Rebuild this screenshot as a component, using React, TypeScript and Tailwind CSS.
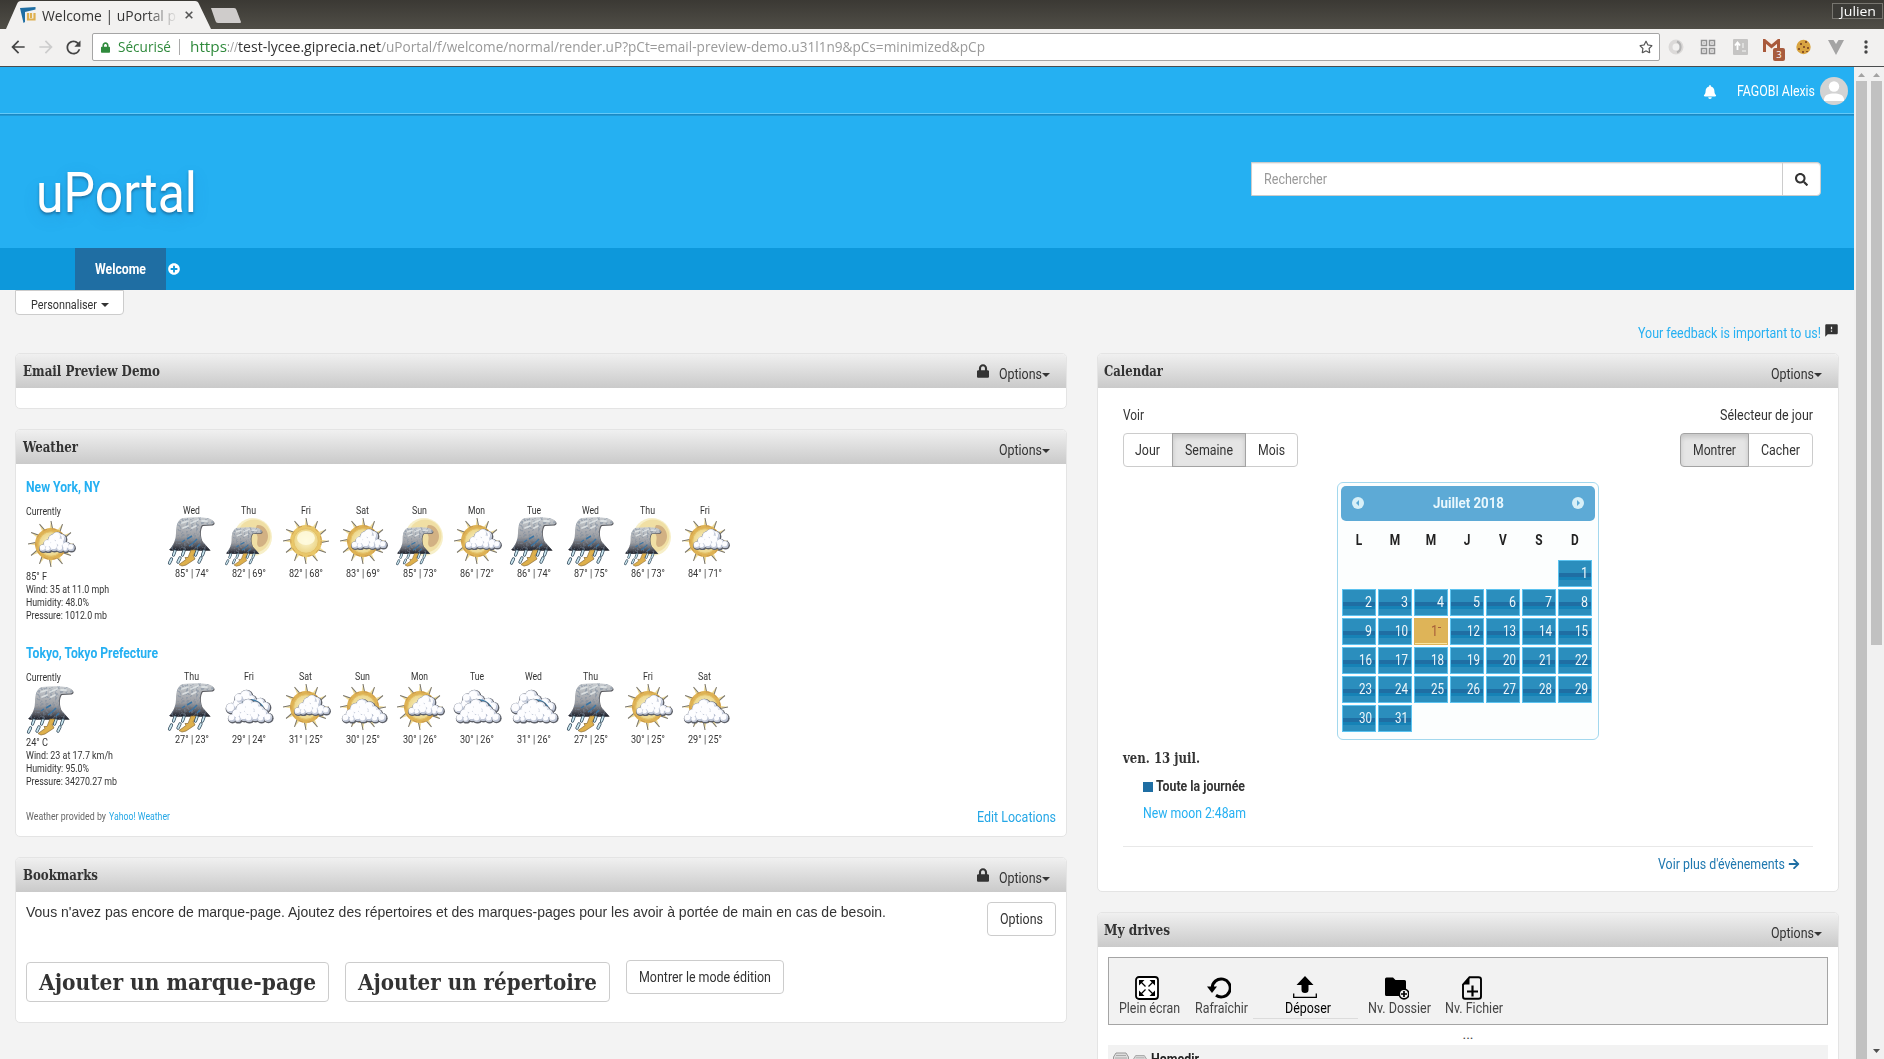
import { ReactNode, useLayoutEffect, useRef } from "react";
import {
  FaArrowRight,
  FaBell,
  FaLock,
  FaSearch,
  FaPlusCircle,
  FaRegStar,
} from "react-icons/fa";
import { MdArrowBack, MdArrowForward, MdRefresh, MdFeedback } from "react-icons/md";

/* Single-line text condensed horizontally to a given width. */
function T({ w, children, className = "" }: { w: number; children: ReactNode; className?: string }) {
  const ref = useRef<HTMLSpanElement>(null);
  useLayoutEffect(() => {
    const el = ref.current;
    if (!el) return;
    el.style.transform = "none";
    const natural = el.getBoundingClientRect().width;
    el.style.transform = `scaleX(${w / natural})`;
  }, [w, children]);
  return (
    <span className={"inline-block shrink-0 align-top whitespace-nowrap " + className} style={{ width: w }}>
      <span ref={ref} className="inline-block origin-left whitespace-pre">
        {children}
      </span>
    </span>
  );
}

const SLAB = "font-['DejaVu_Serif_Condensed','DejaVu_Serif',serif] font-bold";

/* ---------- weather drawings ---------- */

function SunBody({ bright = false }: { bright?: boolean }) {
  return (
    <g>
      {Array.from({ length: 12 }, (_, i) => (
        <g key={i} transform={`rotate(${i * 30} 24 24)`}>
          <path d="M22.4 10 L24 1 L25.8 10Z" fill="#efdc9a" />
          <path d="M24 1 L25.8 10" stroke="#77736a" strokeWidth="1" />
        </g>
      ))}
      <circle cx="24" cy="24" r="16" fill={bright ? "#e9c769" : "#deb254"} />
      <circle cx="24" cy="24" r="15.2" stroke="#c08b45" strokeWidth="1" strokeDasharray="4 5" opacity=".7" />
      <circle cx="24" cy="24" r="12.3" fill="url(#sunCore)" stroke="#e4c067" strokeWidth="1" />
      {bright && <ellipse cx="24" cy="21" rx="9" ry="7" fill="#fffbe0" opacity=".85" />}
    </g>
  );
}

type Puff = [number, number, number];

/* A cumulus built from overlapping puffs, dark along its lower right rim. */
function Cloud({ puffs }: { puffs: Puff[] }) {
  return (
    <g>
      {puffs.map(([x, y, r], i) => (
        <circle key={i} cx={x + 0.5} cy={y + 0.7} r={r + 0.9} fill="#5d6069" />
      ))}
      {puffs.map(([x, y, r], i) => (
        <circle key={i} cx={x} cy={y} r={r} fill="#e3e7f1" />
      ))}
      {puffs.map(([x, y, r], i) => (
        <g key={i}>
          <circle cx={x + r * 0.2} cy={y + r * 0.25} r={r * 0.75} fill="#b4bccf" opacity=".75" />
          <circle cx={x - r * 0.12} cy={y - r * 0.12} r={r * 0.72} fill="#fdfdff" />
        </g>
      ))}
    </g>
  );
}

const SMALL_CLOUD: Puff[] = [
  [34, 19, 5],
  [27, 20, 6],
  [30, 17, 5],
  [21, 24, 4.5],
  [33, 23, 5.5],
  [16, 28, 3.5],
  [27, 26, 5],
  [39, 26, 4],
  [44, 27.5, 3.5],
  [21, 28.5, 3],
  [33, 28, 3.5],
  [38.5, 29, 2.5],
];

const BACK_CLOUD: Puff[] = [
  [6, 25, 5],
  [13, 21, 5],
  [21, 13, 6],
  [14, 15, 4.5],
  [26, 17, 5],
  [35, 20, 5],
  [40, 24, 5],
];

const BIG_CLOUD: Puff[] = [
  [23, 22, 6],
  [30, 24, 5.5],
  [17, 26, 6],
  [25, 28, 6.5],
  [34, 28, 5.5],
  [12, 31, 5],
  [38, 31, 5],
  [19, 33, 5],
  [30, 33, 5],
  [7, 35, 3.8],
  [43, 34.5, 4.2],
  [13, 36, 3],
  [24, 35, 4],
  [36, 35.5, 3.5],
];

const STORM_PATH =
  "M0 33C4 29 7 23 7 16C7 8 9 2 14 1C22 0 32 0 38 1C44 2 47 6 43 7.500L33 8C30 12 31 20 33 24L41 33Z";

function StormCloud() {
  return (
    <g>
      <path d={STORM_PATH} fill="#5a5b60" transform="translate(.8 .9)" />
      <path d={STORM_PATH} fill="url(#stormFill)" />
      <path d={STORM_PATH} fill="#000" filter="url(#grain)" opacity=".5" />
      <path d="M13 6l6-2M22 6l7-3M33 4l5 0M14 11l5-2M23 11l4-2" stroke="#e4e8ea" strokeWidth="1.800" strokeLinecap="round" opacity=".8" />
      <path d="M18 22l5-3M24 26l4-4M13 25l3-2M20 29l4-3M28 30l3-3" stroke="#3a74a3" strokeWidth="1.500" />
      <path d="M22 33h6l-2 5h-2l2 4l-9 6l-4 1l-3-1.500l7-5l-1-2h3z" fill="#deb04c" stroke="#8a6a34" strokeWidth=".7" />
      <path d="M6 34l-1.500 4M15 34l-1.500 4M2.500 42l-2 4M11 41l-2 4M28 34l-1.500 4M35 34l-1.500 4M32 41l-2 4" stroke="#30485a" strokeWidth="3.200" strokeLinecap="round" />
      <path d="M6 34l-1.500 4M15 34l-1.500 4M2.500 42l-2 4M11 41l-2 4M28 34l-1.500 4M35 34l-1.500 4M32 41l-2 4" stroke="#cbe6ef" strokeWidth="1.700" strokeLinecap="round" />
    </g>
  );
}

type Kind = "storm" | "moonstorm" | "sun" | "partly" | "mostly" | "cloudy";

function WeatherIcon({ kind }: { kind: Kind }) {
  return (
    <svg width="48" height="50" viewBox="0 0 48 50" className="block overflow-visible" fill="none">
      {kind === "sun" && <SunBody bright />}
      {kind === "partly" && (
        <>
          <SunBody />
          <Cloud puffs={SMALL_CLOUD} />
        </>
      )}
      {kind === "mostly" && (
        <>
          <SunBody />
          <Cloud puffs={BIG_CLOUD} />
        </>
      )}
      {kind === "cloudy" && (
        <>
          <Cloud puffs={BACK_CLOUD} />
          <path d="M12 27c4-6 8-10 13-10c6 0 10 3 13 7" stroke="#3a7cab" strokeWidth="1.800" />
          <Cloud puffs={BIG_CLOUD} />
        </>
      )}
      {kind === "storm" && (
        <g transform="translate(1 0)">
          <StormCloud />
        </g>
      )}
      {kind === "moonstorm" && (
        <>
          <circle cx="28" cy="20" r="19" fill="#f7efc8" />
          <circle cx="29" cy="19" r="16.500" fill="#f0dfa4" />
          <path d="M32 8c6-1 11 5 11 11c0 6-4 11-9 11c-4-3 0-8-2-12c-2-3-2-7 0-10z" fill="#d2b183" />
          <g transform="translate(1 10) scale(.8)">
            <StormCloud />
          </g>
        </>
      )}
    </svg>
  );
}

function Defs() {
  return (
    <svg width="0" height="0" className="absolute">
      <defs>
        <radialGradient id="sunCore">
          <stop offset="0" stopColor="#fcf7d4" />
          <stop offset="1" stopColor="#ecd587" />
        </radialGradient>
        <linearGradient id="stormFill" x1="0" y1="0" x2="0" y2="1">
          <stop offset="0" stopColor="#c9cdd1" />
          <stop offset=".6" stopColor="#9b9da2" />
          <stop offset=".85" stopColor="#55575f" />
          <stop offset="1" stopColor="#1f222c" />
        </linearGradient>
        <filter id="grain" x="0" y="0" width="100%" height="100%">
          <feTurbulence type="fractalNoise" baseFrequency=".4" numOctaves="2" seed="4" />
          <feColorMatrix type="matrix" values="0 0 0 0 .2 0 0 0 0 .26 0 0 0 0 .34 0 0 0 7 -3.500" />
          <feComposite in2="SourceGraphic" operator="in" />
        </filter>
      </defs>
    </svg>
  );
}

/* ---------- browser frame ---------- */

function BrowserBar() {
  return (
    <div className="shrink-0">
      <div className="flex h-[29px] items-start bg-linear-to-b from-[#3b3934] to-[#504e47]">
        <div className="relative ml-[6px] h-[29px] w-[205px]">
          <svg className="absolute inset-0" width="205" height="29">
            <path d="M0 29L11 4Q12 1 15 1H189Q192 1 193 4L205 29Z" fill="#f2f1f0" />
          </svg>
          <div className="relative flex h-[29px] items-center pl-[14px]">
            <svg width="16" height="17" viewBox="0 0 16 17" className="mt-px mr-[6px]">
              <path d="M0 1L15.500 0V2.500L5 5L5 15L3.500 16Z" fill="#1f6ea3" />
              <path d="M8 6v6.500h6.500V6M11 6v5" stroke="#deb050" strokeWidth="2.200" fill="none" />
            </svg>
            <div className="relative h-[24px] w-[136px] font-['Open_Sans'] text-[15px] leading-[24px] text-[#333]">
              <T w={134}>Welcome | uPortal p</T>
              <div className="absolute top-0 right-0 h-full w-8 bg-linear-to-r from-transparent to-[#f2f1f0]" />
            </div>
            <svg width="8" height="8" viewBox="0 0 8 8" className="ml-[7px] mt-px">
              <path d="M.7 .7L7.300 7.300M7.300 .7L.7 7.300" stroke="#555" strokeWidth="1.600" />
            </svg>
          </div>
        </div>
        <svg width="32" height="16" viewBox="0 0 32 16" className="mt-[8px] -ml-px">
          <path d="M1 0H24Q26 0 26.500 2L31 14Q31 15 30 15H8Q6 15 5.500 13Z" fill="#cfcccb" />
        </svg>
        <div className="mt-[3px] mr-px ml-auto flex h-[16px] w-[51px] items-center justify-center border border-[#77756f] bg-[#3c3b37] font-['Open_Sans'] text-[13px] leading-none text-white">
          <T w={36}>Julien</T>
        </div>
      </div>
      <div className="flex h-[38px] items-center border-b border-[#4a4c4e] bg-[#f2f1f0] pb-px">
        <div className="flex w-[92px] items-center pl-[8px] text-[20px] text-[#444]">
          <MdArrowBack />
          <MdArrowForward className="ml-[8px] text-[#ccc]" />
          <MdRefresh className="ml-[7px] text-[21px]" />
        </div>
        <div className="flex h-[28px] w-[1568px] items-center rounded-[2px] border border-[#a5a5a5] bg-white font-['Open_Sans'] text-[14px] leading-[26px] text-[#9a9a9a]">
          <FaLock className="mr-[8px] ml-[8px] h-[11px] w-[9px] text-[#2f8a3c]" />
          <T w={53} className="text-[#2f8a3c]">Sécurisé</T>
          <span className="mx-[8px] h-[16px] w-px bg-[#aaa]" />
          <T w={37} className="ml-[2px] text-[#2f8a3c]">https</T>
          <T w={11}>://</T>
          <T w={143} className="text-[#333]">test-lycee.giprecia.net</T>
          <T w={604}>/uPortal/f/welcome/normal/render.uP?pCt=email-preview-demo.u31l1n9&pCs=minimized&pCp</T>
          <FaRegStar className="mr-[6px] ml-auto text-[14px] text-[#555]" />
        </div>
        <div className="flex flex-1 items-center pl-[8px]">
          <svg width="16" height="16" viewBox="0 0 16 16" fill="none">
            <circle cx="8" cy="8" r="5.500" stroke="#dbd9d8" strokeWidth="4" />
            <path d="M9 2.500A6 6 0 0 1 9 13.500" stroke="#b3b3b3" strokeWidth="2" />
          </svg>
          <svg width="16" height="16" viewBox="0 0 16 16" fill="none" className="ml-[16px]" stroke="#909090" strokeWidth="1.500">
            <path d="M1.500 1.500h5v5h-5zM9.500 1.500h5v5h-5zM1.500 9.500h5v5h-5zM9.500 9.500h5v5h-5z" />
            <path d="M3.500 4h1M11.500 4h1M3.500 12h1M11.500 12h1" />
          </svg>
          <svg width="15" height="16" viewBox="0 0 15 16" className="ml-[17px]">
            <rect width="15" height="16" rx="1" fill="#c5c4c3" />
            <path d="M4.500 11V5M2 6.500L4.500 3.500L7 6.500" stroke="#fff" strokeWidth="1.800" fill="none" />
            <path d="M10 4v5M9 12h4" stroke="#e6e6e6" strokeWidth="1.500" />
          </svg>
          <svg width="23" height="23" viewBox="0 0 23 23" className="mt-[7px] ml-[15px]">
            <path d="M0 0H17V13H0Z" fill="#f6eee9" />
            <path d="M1.500 13V1.500L8.500 7.500L15.500 1.500V13" stroke="#a9593b" strokeWidth="3" fill="none" />
            <rect x="10" y="9" width="12" height="13" rx="2" fill="#a85c3e" />
            <text x="16" y="19" textAnchor="middle" fontFamily="Open Sans" fontSize="9.500" fill="#fff">3</text>
          </svg>
          <svg width="15" height="16" viewBox="0 0 15 16" className="ml-[10px]">
            <circle cx="7.500" cy="8" r="7.200" fill="#d9a441" />
            <path d="M4 4h2v2H4zM9 2h2v2H9zM2 9h2v2H2zM7 7h2v2H7zM11 8h2v2h-2zM6 12h2v2H6zM10 12h2v1h-2z" fill="#8b5426" />
          </svg>
          <svg width="16" height="15" viewBox="0 0 16 15" className="ml-[17px]">
            <path d="M0 0H5.500L8 4L10.500 0H16L8 15Z" fill="#a4a4a4" />
          </svg>
          <svg width="4" height="14" viewBox="0 0 4 14" className="ml-[20px]" fill="#444">
            <circle cx="2" cy="2" r="1.700" />
            <circle cx="2" cy="7" r="1.700" />
            <circle cx="2" cy="12" r="1.700" />
          </svg>
        </div>
      </div>
    </div>
  );
}

function Scrollbars() {
  return (
    <div className="flex w-[30px] shrink-0 bg-[#f1f1f1] pl-[2px]">
      <div className="flex w-[11px] flex-col">
        <svg width="11" height="14" className="shrink-0">
          <path d="M2 10L5.500 6L9 10Z" fill="#a3a3a3" />
        </svg>
        <div className="flex-1 bg-[#c1c1c1]" />
      </div>
      <div className="ml-[4px] flex w-[11px] flex-col justify-between">
        <div>
          <svg width="11" height="14" className="block">
            <path d="M2 10L5.500 6L9 10Z" fill="#a3a3a3" />
          </svg>
          <div className="h-[564px] bg-[#c1c1c1]" />
        </div>
        <svg width="11" height="14">
          <path d="M2 4L5.500 8L9 4Z" fill="#505050" />
        </svg>
      </div>
    </div>
  );
}

/* ---------- portal ---------- */

function Header() {
  return (
    <header>
      <div className="flex h-[46px] items-start justify-end bg-[#25b0f2] pt-[10px] pr-[6px] text-white">
        <FaBell className="mt-[8px] mr-[20px] h-[14px] w-[14px]" />
        <T w={78} className="text-[14px] leading-[29px]">FAGOBI Alexis</T>
        <svg width="28" height="28" viewBox="0 0 28 28" className="ml-[5px]">
          <circle cx="14" cy="14" r="14" fill="#d3d3d3" />
          <circle cx="14" cy="9.500" r="5.200" fill="#fff" />
          <path d="M4 22.500C4 18 9 16.500 14 16.500S24 18 24 22.500V24H4Z" fill="#fff" />
        </svg>
      </div>
      <div className="h-[135px] border-t border-[#63c9f8] bg-[#25b0f2]">
        <div className="h-[2px] bg-linear-to-b from-[#1a83bd] to-[#229fdc]" />
        <div className="flex items-start justify-between pr-[33px] pl-[36px]">
          <h1 className="mt-[44px] text-[56px] leading-[66px] text-white [text-shadow:0_2px_3px_rgba(20,70,110,.55),0_5px_18px_rgba(20,90,140,.15)]">
            <T w={161}>uPortal</T>
          </h1>
          <div className="mt-[46px] flex h-[34px] w-[570px] overflow-hidden rounded-r border border-[#ccc] bg-white shadow-[inset_0_1px_1px_rgba(0,0,0,.08)]">
            <div className="flex-1 pl-[12px] text-[14px] leading-[32px] text-[#999]">
              <T w={63}>Rechercher</T>
            </div>
            <div className="flex w-[38px] items-center justify-center border-l border-[#ccc]">
              <FaSearch className="text-[13px] text-[#333]" />
            </div>
          </div>
        </div>
      </div>
      <nav className="flex h-[42px] items-center bg-[#0d98db] pl-[75px] text-white">
        <div className="flex h-full w-[91px] items-center justify-center bg-[#1f6ea3] text-[14px] font-bold">
          <T w={51}>Welcome</T>
        </div>
        <FaPlusCircle className="ml-[2px] text-[12px]" />
      </nav>
    </header>
  );
}

function Caret({ className = "" }: { className?: string }) {
  return (
    <svg width="8" height="4" viewBox="0 0 8 4" className={"shrink-0 " + className}>
      <path d="M0 0H8L4 4Z" fill="#333" />
    </svg>
  );
}

function Portlet({
  title,
  tw,
  lock = false,
  className = "",
  headPad = "pl-[7px]",
  children,
}: {
  title: string;
  tw: number;
  lock?: boolean;
  className?: string;
  headPad?: string;
  children?: ReactNode;
}) {
  return (
    <section className={"flex shrink-0 flex-col overflow-hidden rounded-[5px] border border-[#e4e4e4] bg-white " + className}>
      <div className={"flex h-[34px] shrink-0 items-center bg-linear-to-b from-[#f0f0f0] to-[#cacaca] pr-[16px] text-[#333] " + headPad}>
        <h2 className={"text-[14px] leading-[34px] " + SLAB}>
          <T w={tw}>{title}</T>
        </h2>
        <div className="ml-auto flex items-center">
          {lock && <FaLock className="mr-[10px] h-[14px] w-[12px]" />}
          <T w={43} className="mt-[6px] text-[14px] leading-[20px]">Options</T>
          <Caret className="mt-[7px]" />
        </div>
      </div>
      {children}
    </section>
  );
}

type Day = [string, Kind, string];

const NEW_YORK: Day[] = [
  ["Wed", "storm", "85° | 74°"],
  ["Thu", "moonstorm", "82° | 69°"],
  ["Fri", "sun", "82° | 68°"],
  ["Sat", "partly", "83° | 69°"],
  ["Sun", "moonstorm", "85° | 73°"],
  ["Mon", "partly", "86° | 72°"],
  ["Tue", "storm", "86° | 74°"],
  ["Wed", "storm", "87° | 75°"],
  ["Thu", "moonstorm", "86° | 73°"],
  ["Fri", "partly", "84° | 71°"],
];

const TOKYO: Day[] = [
  ["Thu", "storm", "27° | 23°"],
  ["Fri", "cloudy", "29° | 24°"],
  ["Sat", "partly", "31° | 25°"],
  ["Sun", "mostly", "30° | 25°"],
  ["Mon", "partly", "30° | 26°"],
  ["Tue", "cloudy", "30° | 26°"],
  ["Wed", "cloudy", "31° | 26°"],
  ["Thu", "storm", "27° | 25°"],
  ["Fri", "partly", "30° | 25°"],
  ["Sat", "mostly", "29° | 25°"],
];

const DAY_WIDTH: Record<string, number> = { Wed: 17, Thu: 15, Fri: 10, Sat: 13, Sun: 15, Mon: 17, Tue: 14 };

function City({ name, nw, now, facts, days }: { name: string; nw: number; now: Kind; facts: [string, number][]; days: Day[] }) {
  return (
    <div className="h-[166px] text-[11px] leading-[13px] text-[#333]">
      <h3 className="h-[26px] text-[14.500px] leading-[20px] font-bold text-[#25b0f2]">
        <T w={nw}>{name}</T>
      </h3>
      <div className="flex">
        <div className="w-[137px] pt-[1px]">
          <div className="h-[13px]"><T w={35}>Currently</T></div>
          <div className="ml-[1px] h-[52px] pt-[2px]">
            <WeatherIcon kind={now} />
          </div>
          {facts.map(([text, w]) => (
            <div key={text} className="h-[13px]">
              <T w={w}>{text}</T>
            </div>
          ))}
        </div>
        {days.map(([day, kind, temps], i) => (
          <div key={i} className="flex w-[57px] flex-col items-center">
            <T w={DAY_WIDTH[day]}>{day}</T>
            <div className="h-[50px]">
              <WeatherIcon kind={kind} />
            </div>
            <T w={34}>{temps}</T>
          </div>
        ))}
      </div>
    </div>
  );
}

function Weather() {
  return (
    <Portlet title="Weather" tw={55} className="mt-[20px] h-[408px]">
      <div className="flex flex-1 flex-col pt-[14px] pr-[10px] pl-[10px]">
        <City
          name="New York, NY"
          nw={74}
          now="partly"
          facts={[["85° F", 21], ["Wind: 35 at 11.0 mph", 83], ["Humidity: 48.0%", 63], ["Pressure: 1012.0 mb", 81]]}
          days={NEW_YORK}
        />
        <City
          name="Tokyo, Tokyo Prefecture"
          nw={132}
          now="storm"
          facts={[["24° C", 22], ["Wind: 23 at 17.7 km/h", 87], ["Humidity: 95.0%", 63], ["Pressure: 34270.27 mb", 91]]}
          days={TOKYO}
        />
        <div className="-mt-[1px] flex items-center text-[10.500px] leading-[16px] text-[#666]">
          <T w={80}>Weather provided by</T>
          <T w={61} className="ml-[3px] text-[#25a7e6]">Yahoo! Weather</T>
          <T w={79} className="ml-auto text-[14px] leading-[16px] text-[#25a7e6]">Edit Locations</T>
        </div>
      </div>
    </Portlet>
  );
}

function Button({ children, className = "" }: { children: ReactNode; className?: string }) {
  return (
    <div className={"flex shrink-0 items-center justify-center rounded border border-[#ccc] bg-white text-[14px] leading-[20px] text-[#333] " + className}>
      {children}
    </div>
  );
}

function Bookmarks() {
  return (
    <Portlet title="Bookmarks" tw={75} lock className="mt-[20px] h-[166px]">
      <div className="flex flex-col px-[10px] pt-[9px]">
        <div className="flex h-[61px] items-start justify-between">
          <p className="font-['Liberation_Sans'] text-[15px] leading-[22px] text-[#333]">
            <T w={860}>
              Vous n'avez pas encore de marque-page. Ajoutez des répertoires et des marques-pages pour les avoir à portée de main en cas de besoin.
            </T>
          </p>
          <Button className="mt-[1px] h-[34px] w-[69px]">
            <T w={43}>Options</T>
          </Button>
        </div>
        <div className="flex items-start">
          <Button className={"h-[40px] w-[303px] " + SLAB}>
            <T w={277} className="text-[22px] leading-[38px]">Ajouter un marque-page</T>
          </Button>
          <Button className={"ml-[16px] h-[40px] w-[265px] " + SLAB}>
            <T w={239} className="text-[22px] leading-[38px]">Ajouter un répertoire</T>
          </Button>
          <Button className="-mt-[2px] ml-[16px] h-[34px] w-[158px]">
            <T w={132}>Montrer le mode édition</T>
          </Button>
        </div>
      </div>
    </Portlet>
  );
}

function Segmented({ items }: { items: { label: string; tw: number; on?: boolean; cls: string }[] }) {
  return (
    <div className="flex text-[14px] leading-[20px]">
      {items.map((it) => (
        <div
          key={it.label}
          className={
            "flex h-[34px] items-center justify-center border " +
            it.cls +
            (it.on ? " z-10 border-[#a3a3a3] bg-[#e5e5e5] shadow-[inset_0_3px_5px_rgba(0,0,0,.14)]" : " border-[#ccc]")
          }
        >
          <T w={it.tw}>{it.label}</T>
        </div>
      ))}
    </div>
  );
}

const WEEKDAYS = ["L", "M", "M", "J", "V", "S", "D"];

function MonthArrow({ flip = false }: { flip?: boolean }) {
  return (
    <svg width="12" height="12" viewBox="0 0 12 12" className={flip ? "rotate-180" : ""}>
      <circle cx="6" cy="6" r="6" fill="#d8f0f8" />
      <path d="M7 3V9L4 6Z" fill="#5daad6" />
    </svg>
  );
}

function DatePicker() {
  return (
    <div className="mt-[15px] ml-[214px] h-[258px] w-[262px] rounded-[6px] border border-[#a3d8ee] bg-[#fcfefe] p-[3px]">
      <div className="flex h-[35px] items-center justify-between rounded-[5px] bg-[#5daad6] px-[11px] pb-[2px] text-[15px] font-bold text-[#eaf8fd]">
        <MonthArrow />
        <T w={71}>Juillet 2018</T>
        <MonthArrow flip />
      </div>
      <div className="mt-[9px] grid grid-cols-[repeat(7,36px)] text-center text-[14px] leading-[20px] font-bold text-[#222]">
        {WEEKDAYS.map((d, i) => (
          <span key={i} className="scale-x-85">{d}</span>
        ))}
      </div>
      <div className="mt-[10px] grid grid-cols-[repeat(7,34px)] gap-[2px] pl-px text-[14px] leading-[25px] text-[#eef7fb]">
        {Array.from({ length: 31 }, (_, i) => i + 1).map((n) =>
          n === 11 ? (
            <div key={n} className="flex h-[27px] justify-end border border-[#deb458] bg-[#deb458] pr-[6px] text-[#a65f3a] shadow-[inset_0_-1px_0_#fae5a0]">
              <T w={7}>1</T>
              <span className="mt-[8px] h-px w-[3px] bg-[#a65f3a]" />
            </div>
          ) : (
            <div
              key={n}
              className={
                "h-[27px] border border-[#5cc3f0] bg-[linear-gradient(#2b8ebd_0_12px,#1f6ea3_12px_16px,#1682b6_16px_19px,#2b8ebd_19px)] pr-[3px] text-right " +
                (n === 1 ? "col-start-7" : "")
              }
            >
              <T w={n < 10 ? 7 : 13}>{n}</T>
            </div>
          ),
        )}
      </div>
    </div>
  );
}

function Calendar() {
  return (
    <Portlet title="Calendar" tw={59} headPad="pl-[6px]" className="h-[539px]">
      <div className="flex flex-col px-[25px] pt-[17px] text-[14px] leading-[20px] text-[#333]">
        <div className="flex justify-between">
          <T w={21}>Voir</T>
          <T w={93}>Sélecteur de jour</T>
        </div>
        <div className="mt-[8px] flex justify-between">
          <Segmented
            items={[
              { label: "Jour", tw: 25, cls: "w-[50px] rounded-l pr-px" },
              { label: "Semaine", tw: 48, on: true, cls: "-ml-px w-[74px]" },
              { label: "Mois", tw: 27, cls: "-ml-px w-[53px] rounded-r" },
            ]}
          />
          <Segmented
            items={[
              { label: "Montrer", tw: 43, on: true, cls: "w-[69px] rounded-l" },
              { label: "Cacher", tw: 39, cls: "-ml-px w-[65px] rounded-r" },
            ]}
          />
        </div>
        <DatePicker />
        <h3 className={"mt-[8px] text-[14px] leading-[20px] " + SLAB}>
          <T w={77}>ven. 13 juil.</T>
        </h3>
        <div className="mt-[8px] flex items-center pl-[20px] font-bold">
          <span className="mt-[2px] mr-[3px] size-[10px] bg-[#1f6ea3]" />
          <T w={89}>Toute la journée</T>
        </div>
        <div className="mt-[7px] pl-[20px] text-[#25b0f2]">
          <T w={103}>New moon 2:48am</T>
        </div>
        <div className="mt-[23px] flex items-center justify-end border-t border-[#e8e8e8] pt-[7px] pr-[13px] text-[#1f78b0]">
          <T w={127}>Voir plus d'évènements</T>
          <FaArrowRight className="ml-[3px] text-[12px] text-[#1f6ea3]" />
        </div>
      </div>
    </Portlet>
  );
}

const DRIVE_ICONS = {
  full: (
    <>
      <rect x="1" y="1" width="22" height="22" rx="3" fill="#fff" stroke="#000" strokeWidth="1.800" />
      <path d="M4 4h5.500L4 9.500zM20 4h-5.500l5.500 5.500zM4 20h5.500l-5.500-5.500zM20 20h-5.500l5.500-5.500z" fill="#000" />
      <path d="M6 6l4.500 4.500M18 6l-4.500 4.500M6 18l4.500-4.500M18 18l-4.500-4.500" stroke="#000" strokeWidth="1.300" />
    </>
  ),
  refresh: (
    <>
      <path d="M5.200 12A9 9 0 1 1 9 19.300" fill="none" stroke="#000" strokeWidth="3" />
      <path d="M0 10.500H10L5 17Z" fill="#000" />
    </>
  ),
  upload: (
    <>
      <path d="M12 0L20.500 9H15.500V14Q15.500 17 12 17T8.500 14V9H3.500Z" fill="#000" />
      <path d="M.7 17.500V21.300H23.300V17.500" fill="none" stroke="#000" strokeWidth="1.300" />
    </>
  ),
  folder: (
    <>
      <path d="M0 3Q0 1.500 1.500 1.500H8L10.500 4H19.500Q21 4 21 5.500V14L14 20H1.500Q0 20 0 18.500Z" fill="#000" />
      <circle cx="19" cy="18" r="4.800" fill="#f2f2f2" stroke="#000" strokeWidth="1.700" />
      <path d="M19 15v6M16 18h6" stroke="#000" strokeWidth="1.700" />
    </>
  ),
  file: (
    <>
      <path d="M9.500 1.200H18.500Q21 1.200 21 3.500V20.500Q21 22.800 18.500 22.800H5Q3 22.800 3 20.500V8.500Z" fill="none" stroke="#000" strokeWidth="1.900" />
      <path d="M9.500 1V8.500H3Z" fill="#000" />
      <path d="M12.500 9.500V20.500M7 15.500H18" stroke="#000" strokeWidth="2.200" />
    </>
  ),
};

function DriveAction({ icon, label, tw, cls }: { icon: ReactNode; label: string; tw: number; cls: string }) {
  return (
    <div className={"flex flex-col items-center " + cls}>
      <svg width="24" height="24" viewBox="0 0 24 24" className="-ml-[5px]">{icon}</svg>
      <T w={tw} className="mt-[-2px]">{label}</T>
    </div>
  );
}

function DriveGlyph({ className = "" }: { className?: string }) {
  return (
    <svg width="16" height="12" viewBox="0 0 16 12" className={className}>
      <path d="M3 1H13L15.500 5V12H.5V5Z" fill="#ddd" stroke="#999" />
      <path d="M3 3.500H13M2 6H14" stroke="#aaa" />
    </svg>
  );
}

function Drives() {
  return (
    <Portlet title="My drives" tw={66} headPad="pl-[6px]" className="mt-[20px] h-[200px]">
      <div className="px-[10px] pt-[10px] text-[14px] leading-[20px] text-[#444]">
        <div className="flex h-[68px] items-start border border-[#a5a5a5] bg-[#f2f2f2] pt-[18px] pl-[10px]">
          <DriveAction icon={DRIVE_ICONS.full} label="Plein écran" tw={61} cls="w-[61px]" />
          <DriveAction icon={DRIVE_ICONS.refresh} label="Rafraîchir" tw={53} cls="ml-[15px] w-[53px]" />
          <DriveAction icon={DRIVE_ICONS.upload} label="Déposer" tw={46} cls="ml-[5px] h-[43px] w-[105px] border-b border-[#dcdcdc] pl-[4px] text-black" />
          <DriveAction icon={DRIVE_ICONS.folder} label="Nv. Dossier" tw={63} cls="ml-[10px] w-[63px]" />
          <DriveAction icon={DRIVE_ICONS.file} label="Nv. Fichier" tw={58} cls="ml-[14px] w-[58px]" />
        </div>
        <div className="h-[20px] text-center leading-[18px]">...</div>
        <div className="flex h-[40px] items-start bg-[#f2f2f2] pt-[7px] pl-[5px] font-bold text-[#222]">
          <DriveGlyph />
          <DriveGlyph className="mt-[2px] ml-[4px] w-[14px]" />
          <T w={48} className="ml-[4px] leading-[14px]">Homedir</T>
        </div>
      </div>
    </Portlet>
  );
}

export default function App() {
  return (
    <div className="flex h-[1059px] w-[1884px] flex-col overflow-hidden bg-[#f3f3f3] font-['Roboto',sans-serif]">
      <Defs />
      <BrowserBar />
      <div className="flex min-h-0 flex-1">
        <main className="flex w-[1854px] flex-col overflow-hidden">
          <Header />
          <div className="ml-[15px] flex h-[25px] w-[109px] shrink-0 items-center rounded-b border border-[#ccc] bg-white pt-[5px] pl-[15px] text-[12px] leading-[20px] text-[#333]">
            <T w={66}>Personnaliser</T>
            <Caret className="ml-[4px]" />
          </div>
          <div className="flex h-[38px] shrink-0 items-start justify-end pt-[8px] pr-[15px] text-[14.500px] leading-[20px] text-[#25b0f2]">
            <T w={183} className="mt-px">Your feedback is important to us!</T>
            <MdFeedback className="ml-[3px] text-[15px] text-[#333]" />
          </div>
          <div className="flex items-start">
            <div className="ml-[15px] flex w-[1052px] shrink-0 flex-col">
              <Portlet title="Email Preview Demo" tw={137} lock className="h-[56px]" />
              <Weather />
              <Bookmarks />
            </div>
            <div className="ml-[30px] flex w-[742px] shrink-0 flex-col">
              <Calendar />
              <Drives />
            </div>
          </div>
        </main>
        <Scrollbars />
      </div>
    </div>
  );
}
